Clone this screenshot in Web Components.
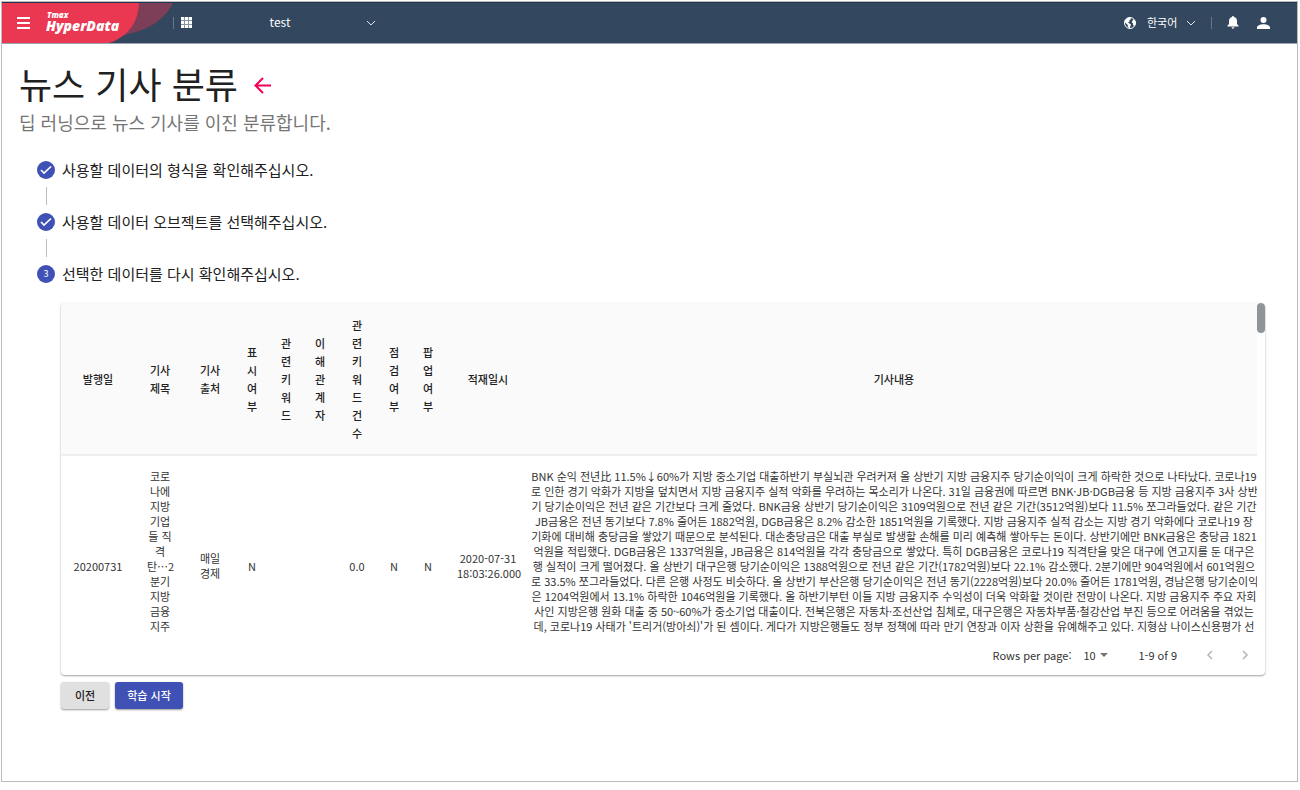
<!DOCTYPE html>
<html lang="ko">
<head>
<meta charset="utf-8">
<title>Tmax HyperData</title>
<style>
  html { height: 100%; }
  body {
    margin: 0;
    box-sizing: border-box;
    min-height: 100%;
    display: flex;
    padding: 1px 2px 8px 1px;
    background: #fff;
    color: #212121;
    font-family: "Noto Sans CJK KR", "Noto Sans", sans-serif;
    font-size: 11px;
  }
</style>
</head>
<body>
<hd-app></hd-app>

<template id="t-app">
  <style>
    :host { display: flex; flex-direction: column; flex: 1; min-width: 0; box-sizing: border-box; border: 1px solid #bcbcbc; }
    main { padding: 16px 32px 16px 17px; }
    .steps { padding: 23px 0 0 18px; }
    .panel { padding: 20px 0 0 42px; }
    .actions { display: flex; gap: 6px; padding: 7px 0 0 42px; }
  </style>
  <hd-header></hd-header>
  <main>
    <hd-page-title subtitle="딥 러닝으로 뉴스 기사를 이진 분류합니다.">뉴스 기사 분류</hd-page-title>
    <div class="steps">
      <hd-step done number="1">사용할 데이터의 형식을 확인해주십시오.</hd-step>
      <hd-step done number="2">사용할 데이터 오브젝트를 선택해주십시오.</hd-step>
      <hd-step last number="3">선택한 데이터를 다시 확인해주십시오.</hd-step>
    </div>
    <div class="panel"><hd-data-card></hd-data-card></div>
    <div class="actions">
      <hd-button>이전</hd-button>
      <hd-button primary>학습 시작</hd-button>
    </div>
  </main>
</template>

<template id="t-header">
  <style>
    :host { display: flex; align-items: center; box-sizing: border-box; height: 42px; padding-bottom: 1px; background: #33475e; border-top: 1px solid #1f3550; border-bottom: 1px solid #9aa5b1; color: #fff; }
    .brand { position: relative; display: flex; align-items: center; align-self: stretch; width: 171px; box-sizing: border-box; padding-left: 15px; gap: 16px; }
    .brand .bg { position: absolute; left: 0; top: 0; width: 171px; height: 40px; }
    button { position: relative; display: flex; padding: 0; border: 0; background: none; color: inherit; }
    a { position: relative; display: block; padding-bottom: 3px; color: inherit; text-decoration: none; font-family: "Open Sans", sans-serif; font-weight: 800; font-style: italic; }
    a span { display: block; }
    .small { font-size: 8px; line-height: 9px; padding-left: 1px; }
    .big { font-size: 14px; line-height: 14px; }
    .sep { width: 1px; height: 12px; background: #687789; }
    .grid { margin-left: 7px; }
    .project { display: flex; align-items: center; width: 184px; }
    select { appearance: none; border: 0; padding: 0 0 2px; margin: 0; background: none; color: inherit; font: inherit; line-height: 20px; }
    .project select { flex: 1; padding-left: 2px; text-align: center; text-align-last: center; font-size: 12px; }
    .right { margin-left: auto; display: flex; align-items: center; padding-right: 27px; }
    .lang { display: flex; align-items: center; margin-left: 11px; }
    .lang select { width: 39px; font-size: 11px; }
    .right .sep { margin: 0 15px; }
    .user { margin-left: 18px; }
    svg { display: block; flex: none; }
  </style>
  <div class="brand">
    <svg class="bg" viewBox="0 0 171 40" aria-hidden="true">
      <path d="M130 0H171C163 16 148 27 122 32L110 40Z" fill="#7c3f57"/>
      <path d="M0 0H137C136 22 124 34 107 40H0Z" fill="#ea3853"/>
    </svg>
    <button aria-label="메뉴"><svg width="13" height="12" viewBox="0 0 13 12" fill="#fff"><path d="M0 0h13v2H0zM0 5h13v2H0zM0 10h13v2H0z"/></svg></button>
    <a href="#"><span class="small">Tmax</span><span class="big">HyperData</span></a>
  </div>
  <span class="sep"></span>
  <button class="grid" aria-label="앱 목록"><svg width="11" height="11" viewBox="0 0 11 11" fill="#fff"><path d="M0 0h11v11H0z" fill="#8794a3"/><path d="M0 0h3v3H0zM4 0h3v3H4zM8 0h3v3H8zM0 4h3v3H0zM4 4h3v3H4zM8 4h3v3H8zM0 8h3v3H0zM4 8h3v3H4zM8 8h3v3H8z"/></svg></button>
  <div class="project">
    <select aria-label="프로젝트"><option>test</option></select>
    <svg width="10" height="6" viewBox="0 0 10 6" fill="none" stroke="#dfe4e9"><path d="M1 1l4 4 4-4"/></svg>
  </div>
  <div class="right">
    <svg width="12" height="12" viewBox="0 0 12 12"><circle cx="6" cy="6" r="5.500" fill="none" stroke="#fff"/><path d="M.6 3.500L3.500.8 7 .6 6.600 2.600 5.200 3.400l.4 1.100L4 5.400 5.400 6.600l1.600.7-.6 2L5.600 11.400 4 10 3.600 7.800 1 5.500zM8.400 3.600L10 2.600 11.600 5v2L10.400 9 9 8V6.200L7.800 5.400z" fill="#fff"/></svg>
    <div class="lang">
      <select aria-label="언어"><option>한국어</option></select>
      <svg width="10" height="6" viewBox="0 0 10 6" fill="none" stroke="#dfe4e9"><path d="M1 1l4 4 4-4"/></svg>
    </div>
    <span class="sep"></span>
    <button aria-label="알림"><svg width="12" height="13" viewBox="0 0 12 13" fill="#fff"><path d="M6 0a1 1 0 0 1 1 1c2 .5 3 2 3 4v3l1.600 1.700v.8H.4v-.8L2 8V5c0-2 1-3.500 3-4a1 1 0 0 1 1-1zM4.600 11.300h2.800a1.400 1.400 0 0 1-2.800 0z"/></svg></button>
    <button class="user" aria-label="사용자"><svg width="13" height="12" viewBox="0 0 13 12" fill="#fff"><circle cx="6.500" cy="3" r="3"/><path d="M0 12v-1.500C0 8.500 3 7.200 6.500 7.200S13 8.500 13 10.500V12z"/></svg></button>
  </div>
</template>

<template id="t-title">
  <style>
    :host { display: block; }
    .row { display: flex; align-items: center; gap: 16px; }
    h1 { margin: 0; font-size: 36px; line-height: 46px; font-weight: 400; }
    p { margin: 0; font-size: 18px; line-height: 32px; color: #757575; }
    button { display: flex; padding: 5px 0 0; border: 0; background: none; }
  </style>
  <div class="row">
    <h1><slot></slot></h1>
    <button aria-label="뒤로"><svg width="17" height="17" viewBox="0 0 17 17" fill="none" stroke="#f50057" stroke-width="2"><path d="M17 8.500H2M9 1L1.500 8.500 9 16"/></svg></button>
  </div>
  <p></p>
</template>

<template id="t-step">
  <style>
    :host { display: block; }
    .row { display: flex; align-items: center; gap: 7px; height: 18px; font-size: 15px; line-height: 18px; }
    .dot { display: flex; align-items: center; justify-content: center; width: 18px; height: 18px; border-radius: 50%; background: #3f51b5; color: #fff; font-size: 9px; }
    .line { width: 1px; height: 18px; margin: 8px 0 8px 9px; background: #bdbdbd; }
    :host([last]) .line { display: none; }
    svg, :host([done]) .n { display: none; }
    :host([done]) svg { display: block; }
  </style>
  <div class="row">
    <span class="dot"><span class="n"></span><svg width="12" height="10" viewBox="0 0 12 10" fill="none" stroke="#fff" stroke-width="1.700"><path d="M1 5l3 3 7-6.500"/></svg></span>
    <slot></slot>
  </div>
  <div class="line"></div>
</template>

<template id="t-card">
  <style>
    :host { display: block; border-radius: 4px; overflow: hidden; background: #fff; box-shadow: 0 1px 2px rgba(0,0,0,.36), 0 0 1px rgba(0,0,0,.1); }
    .view { display: flex; height: 334px; overflow: hidden; }
    .body { flex: 1; min-width: 0; overflow: hidden; }
    .bar { width: 8px; }
    .thumb { height: 30px; border-radius: 4px; background: #8f9499; }
    table { width: 100%; table-layout: fixed; border-collapse: separate; border-spacing: 0; text-align: center; }
    th, td { padding: 12px; font-size: 11px; }
    th { height: 127px; font-weight: 500; line-height: 18px; background: #fafafa; border-bottom: 2px solid #efefef; }
    td { height: 195px; line-height: 15px; color: #333; white-space: nowrap; }
    .date { width: 50px; } .two { width: 26px; } .one { width: 10px; } .num { width: 16px; } .time { width: 62px; }
    .top { vertical-align: top; padding-top: 13px; }
    .article { padding-left: 0; padding-right: 0; }
  </style>
  <div class="view">
    <div class="body">
      <table>
        <thead><tr>
          <th class="date">발행일</th><th class="two">기사 제목</th><th class="two">기사 출처</th><th class="one">표시여부</th><th class="one">관련키워드</th><th class="one">이해관계자</th><th class="num">관<br>련<br>키<br>워<br>드<br>건<br>수</th><th class="one">점검여부</th><th class="one">팝업여부</th><th class="time">적재일시</th><th>기사내용</th>
        </tr></thead>
        <tbody><tr>
          <td>20200731</td>
          <td class="top">코로<br>나에<br>지방<br>기업<br>들 직<br>격<br>탄…2<br>분기<br>지방<br>금융<br>지주</td>
          <td>매일<br>경제</td><td>N</td><td></td><td></td><td>0.0</td><td>N</td><td>N</td>
          <td>2020-07-31<br>18:03:26.000</td>
          <td class="top article">BNK 순익 전년比 11.5%↓60%가 지방 중소기업 대출하반기 부실뇌관 우려커져 올 상반기 지방 금융지주 당기순이익이 크게 하락한 것으로 나타났다. 코로나19<br>로 인한 경기 악화가 지방을 덮치면서 지방 금융지주 실적 악화를 우려하는 목소리가 나온다. 31일 금융권에 따르면 BNK·JB·DGB금융 등 지방 금융지주 3사 상반<br>기 당기순이익은 전년 같은 기간보다 크게 줄었다. BNK금융 상반기 당기순이익은 3109억원으로 전년 같은 기간(3512억원)보다 11.5% 쪼그라들었다. 같은 기간<br>JB금융은 전년 동기보다 7.8% 줄어든 1882억원, DGB금융은 8.2% 감소한 1851억원을 기록했다. 지방 금융지주 실적 감소는 지방 경기 악화에다 코로나19 장<br>기화에 대비해 충당금을 쌓았기 때문으로 분석된다. 대손충당금은 대출 부실로 발생할 손해를 미리 예측해 쌓아두는 돈이다. 상반기에만 BNK금융은 충당금 1821<br>억원을 적립했다. DGB금융은 1337억원을, JB금융은 814억원을 각각 충당금으로 쌓았다. 특히 DGB금융은 코로나19 직격탄을 맞은 대구에 연고지를 둔 대구은<br>행 실적이 크게 떨어졌다. 올 상반기 대구은행 당기순이익은 1388억원으로 전년 같은 기간(1782억원)보다 22.1% 감소했다. 2분기에만 904억원에서 601억원으<br>로 33.5% 쪼그라들었다. 다른 은행 사정도 비슷하다. 올 상반기 부산은행 당기순이익은 전년 동기(2228억원)보다 20.0% 줄어든 1781억원, 경남은행 당기순이익<br>은 1204억원에서 13.1% 하락한 1046억원을 기록했다. 올 하반기부턴 이들 지방 금융지주 수익성이 더욱 악화할 것이란 전망이 나온다. 지방 금융지주 주요 자회<br>사인 지방은행 원화 대출 중 50~60%가 중소기업 대출이다. 전북은행은 자동차·조선산업 침체로, 대구은행은 자동차부품·철강산업 부진 등으로 어려움을 겪었는<br>데, 코로나19 사태가 '트리거(방아쇠)'가 된 셈이다. 게다가 지방은행들도 정부 정책에 따라 만기 연장과 이자 상환을 유예해주고 있다. 지형삼 나이스신용평가 선</td>
        </tr></tbody>
      </table>
    </div>
    <div class="bar"><div class="thumb"></div></div>
  </div>
  <hd-pagination></hd-pagination>
</template>

<template id="t-pagination">
  <style>
    :host { display: flex; align-items: center; justify-content: flex-end; box-sizing: border-box; height: 38px; padding: 0 16px 2px 0; color: #333; font-size: 11px; line-height: 18px; }
    .pick { display: flex; align-items: center; margin: 0 30px 0 12px; gap: 4px; }
    select { appearance: none; border: 0; padding: 0; margin: 0; width: 13px; background: none; color: inherit; font: inherit; overflow: visible; }
    button { display: flex; padding: 0; border: 0; background: none; }
    .prev { margin: 0 29px; }
    svg { display: block; flex: none; }
  </style>
  <label for="rows">Rows per page:</label>
  <div class="pick"><select id="rows"><option>10</option></select><svg width="8" height="4" viewBox="0 0 8 4" fill="#757575"><path d="M0 0h8L4 4z"/></svg></div>
  <span>1-9 of 9</span>
  <button class="prev" aria-label="이전 페이지" disabled><svg width="7" height="10" viewBox="0 0 7 10" fill="none" stroke="#b5b5b5" stroke-width="1.500"><path d="M6 1L2 5l4 4"/></svg></button>
  <button aria-label="다음 페이지" disabled><svg width="7" height="10" viewBox="0 0 7 10" fill="none" stroke="#b5b5b5" stroke-width="1.500"><path d="M1 1l4 4-4 4"/></svg></button>
</template>

<template id="t-button">
  <style>
    :host { display: block; }
    button { display: block; height: 27px; padding: 0 14px; border: 0; border-radius: 3px; background: #e0e0e0; color: #212121; font: inherit; font-weight: 500; line-height: 27px; box-shadow: 0 1px 2px rgba(0,0,0,.4); }
    :host([primary]) button { padding: 0 12px; background: #3f51b5; color: #fff; }
  </style>
  <button><slot></slot></button>
</template>

<script>
  class HdElement extends HTMLElement {
    constructor() {
      super();
      const t = document.getElementById(this.constructor.template);
      this.attachShadow({ mode: "open" }).append(t.content.cloneNode(true));
    }
  }
  customElements.define("hd-button", class extends HdElement { static template = "t-button"; });
  customElements.define("hd-pagination", class extends HdElement { static template = "t-pagination"; });
  customElements.define("hd-data-card", class extends HdElement { static template = "t-card"; });
  customElements.define("hd-step", class extends HdElement {
    static template = "t-step";
    connectedCallback() {
      if (!this.hasAttribute("done")) this.shadowRoot.querySelector(".n").textContent = this.getAttribute("number");
    }
  });
  customElements.define("hd-page-title", class extends HdElement {
    static template = "t-title";
    connectedCallback() { this.shadowRoot.querySelector("p").textContent = this.getAttribute("subtitle"); }
  });
  customElements.define("hd-header", class extends HdElement { static template = "t-header"; });
  customElements.define("hd-app", class extends HdElement { static template = "t-app"; });
</script>
</body>
</html>
